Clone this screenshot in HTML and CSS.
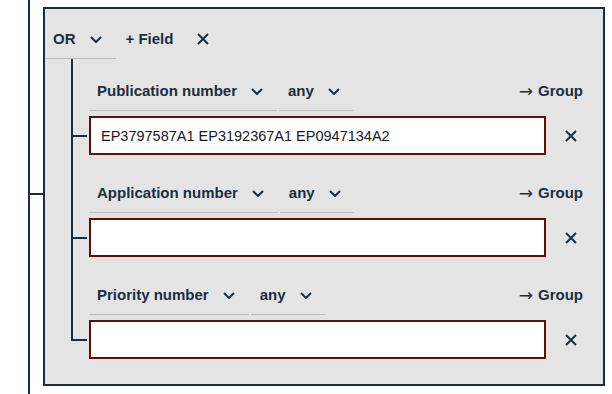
FILE: index.html
```html
<!DOCTYPE html>
<html lang="en">
<head>
  <meta charset="UTF-8">
  <title>Query builder</title>
  <link rel="stylesheet" href="styles.css">
</head>
<body>

  <!-- Outer tree branch -->
  <div class="root">
    <span class="root-stub"></span>

    <!-- Group box -->
    <section class="group">
      <div class="group-head">
        <button class="select op-select">
          <span>OR</span>
          <svg class="chevron" width="12" height="7" viewBox="0 0 12 7"><path d="M1 1 L6 6 L11 1"/></svg>
        </button>
        <button class="link add-field">+ Field</button>
        <button class="link remove-group">
          <svg class="cross" width="12" height="12" viewBox="0 0 12 12"><path d="M1 1 L11 11 M11 1 L1 11"/></svg>
        </button>
      </div>

      <ul class="tree">
        <li class="item">
          <div class="field-row">
            <button class="select field-select">
              <span>Publication number</span>
              <svg class="chevron" width="12" height="7" viewBox="0 0 12 7"><path d="M1 1 L6 6 L11 1"/></svg>
            </button>
            <button class="select mode-select">
              <span>any</span>
              <svg class="chevron" width="12" height="7" viewBox="0 0 12 7"><path d="M1 1 L6 6 L11 1"/></svg>
            </button>
            <button class="link to-group"><span class="arrow">&rarr;</span><span>Group</span></button>
          </div>
          <div class="input-row">
            <input class="query-input" type="text" value="EP3797587A1 EP3192367A1 EP0947134A2">
            <button class="link remove">
              <svg class="cross" width="12" height="12" viewBox="0 0 12 12"><path d="M1 1 L11 11 M11 1 L1 11"/></svg>
            </button>
          </div>
        </li>

        <li class="item">
          <div class="field-row">
            <button class="select field-select">
              <span>Application number</span>
              <svg class="chevron" width="12" height="7" viewBox="0 0 12 7"><path d="M1 1 L6 6 L11 1"/></svg>
            </button>
            <button class="select mode-select">
              <span>any</span>
              <svg class="chevron" width="12" height="7" viewBox="0 0 12 7"><path d="M1 1 L6 6 L11 1"/></svg>
            </button>
            <button class="link to-group"><span class="arrow">&rarr;</span><span>Group</span></button>
          </div>
          <div class="input-row">
            <input class="query-input" type="text" value="">
            <button class="link remove">
              <svg class="cross" width="12" height="12" viewBox="0 0 12 12"><path d="M1 1 L11 11 M11 1 L1 11"/></svg>
            </button>
          </div>
        </li>

        <li class="item">
          <div class="field-row">
            <button class="select field-select">
              <span>Priority number</span>
              <svg class="chevron" width="12" height="7" viewBox="0 0 12 7"><path d="M1 1 L6 6 L11 1"/></svg>
            </button>
            <button class="select mode-select">
              <span>any</span>
              <svg class="chevron" width="12" height="7" viewBox="0 0 12 7"><path d="M1 1 L6 6 L11 1"/></svg>
            </button>
            <button class="link to-group"><span class="arrow">&rarr;</span><span>Group</span></button>
          </div>
          <div class="input-row">
            <input class="query-input" type="text" value="">
            <button class="link remove">
              <svg class="cross" width="12" height="12" viewBox="0 0 12 12"><path d="M1 1 L11 11 M11 1 L1 11"/></svg>
            </button>
          </div>
        </li>
      </ul>
    </section>
  </div>

</body>
</html>
```

FILE: styles.css
```css
/* Global Styles */
body {
  margin: 0;
  font-family: "Liberation Sans", Arial, sans-serif;
  background-color: #ffffff;
  color: #1c2d41;
}

button {
  font: inherit;
  color: inherit;
  background: none;
  border: none;
  margin: 0;
  padding: 0;
  cursor: pointer;
}

svg path {
  fill: none;
  stroke: #1c2d41;
  stroke-width: 2;
}

/* Outer branch line */
.root {
  margin-left: 28px;
  border-left: 2px solid #1a2c3e;
  padding: 7px 0 8px 13px;
  min-height: 379px;
  display: flex;
  align-items: center;
}

.root-stub {
  width: 13px;
  height: 2px;
  margin-left: -13px;
  margin-bottom: 6px;
  background-color: #1a2c3e;
  flex: none;
}

/* Group box */
.group {
  width: 558px;
  border: 2px solid #1a2c3e;
  background-color: #e4e4e4;
  padding-bottom: 19px;
}

.group-head {
  display: flex;
  align-items: flex-end;
  height: 50px;
}

.select {
  display: flex;
  align-items: center;
  font-size: 15px;
  font-weight: bold;
  line-height: 18px;
  border-bottom: 1px solid #bdbdbd;
}

.op-select {
  padding: 0 14px 10px 8px;
  gap: 14px;
}

.link {
  font-size: 15px;
  font-weight: bold;
  line-height: 18px;
  padding-bottom: 11px;
  display: flex;
  align-items: center;
}

.add-field {
  margin-left: 10px;
}

.remove-group {
  margin-left: 24px;
  height: 18px;
  box-sizing: content-box;
}

/* Field tree */
.tree {
  list-style: none;
  margin: 0 0 0 26px;
  padding: 0;
}

.item {
  position: relative;
  padding: 15px 0 6px 18px;
}

.item::before {
  content: "";
  position: absolute;
  left: 0;
  top: 0;
  bottom: 0;
  width: 2px;
  background-color: #1a2c3e;
}

.item:last-child::before {
  bottom: auto;
  height: 78px;
}

.item::after {
  content: "";
  position: absolute;
  left: 0;
  top: 76px;
  width: 16px;
  height: 2px;
  background-color: #1a2c3e;
}

.field-row {
  display: flex;
  align-items: flex-end;
}

.field-select {
  padding: 8px 14px 10px 8px;
  gap: 14px;
}

.mode-select {
  margin-left: 2px;
  padding: 8px 13px 10px 9px;
  gap: 14px;
}

.to-group {
  margin-left: auto;
  margin-right: 20px;
}

.arrow {
  font-family: "DejaVu Sans", sans-serif;
  font-weight: normal;
  font-size: 17px;
  line-height: 18px;
  margin-right: 5px;
}

.input-row {
  display: flex;
  align-items: center;
  margin-top: 5px;
}

.query-input {
  flex: 1;
  min-width: 0;
  height: 39px;
  box-sizing: border-box;
  border: 2px solid #5a1010;
  background-color: #ffffff;
  padding: 0 10px;
  font-family: "Liberation Sans", Arial, sans-serif;
  font-size: 14.5px;
  color: #1a1a1a;
  outline: none;
}

.remove {
  flex: none;
  padding: 0;
  margin: 0 26px 0 19px;
}
```
